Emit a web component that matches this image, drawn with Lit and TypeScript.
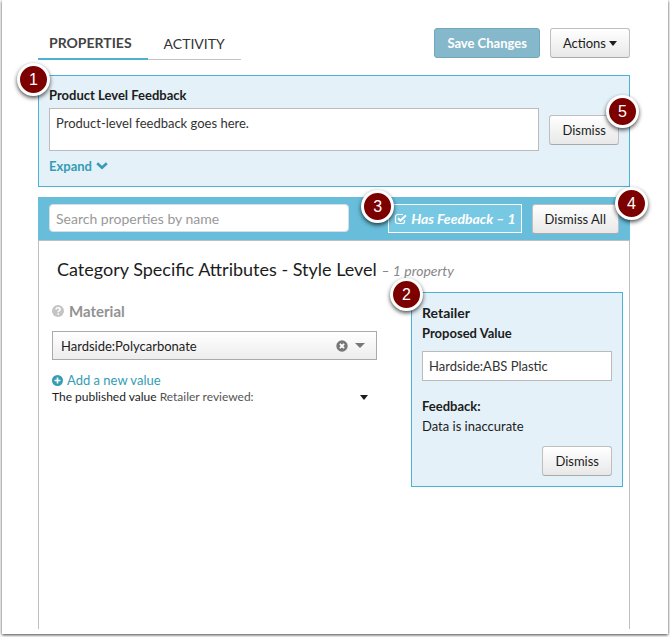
import { LitElement, html, css } from "lit";
import { customElement, property } from "lit/decorators.js";

const caret = html`<svg class="caret" viewBox="0 0 8 5" width="8" height="5" aria-hidden="true"><path d="M0 0h8L4 5z" fill="currentColor"/></svg>`;

@customElement("step-badge")
class StepBadge extends LitElement {
  @property() step = "";

  static styles = css`
    :host {
      position: absolute;
      box-sizing: border-box;
      width: 33px;
      height: 33px;
      border: 3px solid #fff;
      border-radius: 50%;
      background: #7d0000;
      box-shadow: 0 2px 4px rgba(0, 0, 0, 0.7);
      color: #fff;
      font: 16px/27px "Liberation Sans", sans-serif;
      text-align: center;
    }
  `;

  render() {
    return html`${this.step}`;
  }
}

@customElement("app-root")
class AppRoot extends LitElement {
  static styles = css`
    :host {
      display: flex;
      box-sizing: border-box;
      min-height: 100vh;
      padding: 0 2px 3px;
      background: #fff;
      color: #1c1c1c;
      font: 13px/20px Lato, sans-serif;
    }
    * {
      box-sizing: border-box;
    }
    .sheet {
      flex: 1;
      min-width: 0;
      display: flex;
      flex-direction: column;
      padding: 28px 38px 5px 36px;
      background: #fff;
      box-shadow: 0 1px 3px rgba(0, 0, 0, 0.75);
    }
    button,
    input,
    textarea,
    select {
      margin: 0;
      font: inherit;
      color: inherit;
    }
    a {
      color: #349cb5;
      text-decoration: none;
    }
    h2,
    h3,
    p {
      margin: 0;
    }
    .top {
      display: flex;
      align-items: flex-start;
      gap: 10px;
      margin-bottom: 15px;
    }
    .tabs {
      display: flex;
      margin-right: auto;
    }
    .tab {
      height: 32px;
      padding: 0 16px;
      border: 0;
      border-bottom: 1px solid #c3c3c3;
      background: none;
      font-size: 14px;
      color: #333;
    }
    .tab.on {
      padding: 0 16px 0 11px;
      border-bottom: 2px solid #4bb2d3;
      font-weight: bold;
      color: #444;
    }
    .btn {
      flex: none;
      height: 30px;
      padding: 0 12px;
      border: 1px solid #bfbfbf;
      border-bottom-color: #aaa;
      border-radius: 3px;
      background: linear-gradient(#fff, #e8e8e8);
      white-space: nowrap;
    }
    .btn.save {
      border-color: #72a8bc;
      background: #86b8cb;
      color: #fff;
      font-weight: bold;
    }
    .btn .caret {
      margin-left: 3px;
      vertical-align: 2px;
    }
    .panel {
      position: relative;
      border: 1px solid #4bb2d3;
      background: #e4f1f9;
    }
    .product {
      display: grid;
      grid-template-columns: 1fr auto;
      column-gap: 10px;
      align-items: center;
      padding: 9px 10px 10px;
    }
    .product label,
    .product a {
      grid-column: 1 / -1;
      font-weight: bold;
      justify-self: start;
    }
    .product label {
      margin-bottom: 3px;
    }
    .product a {
      display: flex;
      align-items: center;
      gap: 4px;
      margin: 5px 0 0;
    }
    .field {
      display: block;
      width: 100%;
      border: 1px solid #bbb;
      border-radius: 0;
      background: #fff;
      color: #333;
      outline: 0;
    }
    textarea.field {
      height: 43px;
      padding: 4px 6px;
      resize: none;
      overflow: hidden;
    }
    .filter {
      position: relative;
      display: flex;
      align-items: flex-start;
      gap: 10px;
      height: 44px;
      margin-top: 10px;
      padding: 7px 11px 0;
      border-bottom: 1px solid #bfbfbf;
      background: #68bddb;
    }
    .search {
      flex: 0 1 300px;
      min-width: 0;
      height: 28px;
      margin-right: auto;
      padding: 0 6px;
      border: 1px solid #d5dfe3;
      border-radius: 4px;
      background: #fff;
      font-size: 14px;
      outline: 0;
    }
    .search::placeholder {
      color: #999;
    }
    .has {
      position: relative;
      flex: none;
      display: flex;
      align-items: center;
      gap: 3px;
      height: 29px;
      padding: 0 5px;
      border: 1px solid #fff;
      background: #77c8e3;
      color: #fff;
      font-size: 14px;
      font-style: italic;
      font-weight: bold;
    }
    .tick {
      display: grid;
      width: 14px;
      height: 14px;
    }
    .tick > * {
      grid-area: 1 / 1;
      width: 14px;
      height: 14px;
    }
    .tick input {
      appearance: none;
    }
    .content {
      flex: 1;
      padding: 16px 6px 20px 13px;
      border: solid #bfbfbf;
      border-width: 0 1px;
    }
    .title {
      margin-left: 5px;
      font-size: 18px;
      font-weight: normal;
      line-height: 24px;
    }
    .title em {
      font-size: 14px;
      color: #888;
    }
    .cols {
      display: grid;
      grid-template-columns: minmax(0, 325fr) minmax(0, 212fr);
      gap: 34px;
      align-items: start;
      margin-top: 9px;
    }
    .name {
      display: flex;
      align-items: center;
      gap: 5px;
      margin: 9px 0 10px;
      font-size: 15px;
      font-weight: bold;
      color: #929292;
    }
    .picker {
      position: relative;
    }
    .picker select {
      display: block;
      appearance: none;
      width: 100%;
      height: 29px;
      padding: 0 44px 0 8px;
      border: 1px solid #aaa;
      border-radius: 0;
      background: linear-gradient(#fff, #ededed);
      outline: 0;
    }
    .tools {
      position: absolute;
      inset: 0 12px 0 auto;
      display: flex;
      align-items: center;
      gap: 7px;
      color: #777;
      pointer-events: none;
    }
    .clear {
      display: flex;
      padding: 0;
      border: 0;
      background: none;
      pointer-events: auto;
    }
    .add {
      display: flex;
      align-items: center;
      gap: 4px;
      width: max-content;
      margin-top: 10px;
    }
    .published {
      display: flex;
      align-items: center;
      justify-content: space-between;
      width: 100%;
      padding: 0 9px 0 0;
      border: 0;
      background: none;
      font-size: 12px;
      line-height: 14px;
      text-align: left;
    }
    .published span span {
      color: #555;
    }
    .retailer {
      padding: 10px;
    }
    .retailer h3 {
      font-size: 14px;
      line-height: 20px;
    }
    .retailer .field {
      height: 30px;
      margin: 8px 0 15px;
      padding: 0 6px;
    }
    .strong {
      display: block;
      font-weight: bold;
    }
    .retailer .btn {
      display: block;
      margin: 10px 0 0 auto;
    }
    .b1 {
      left: -22px;
      top: -13px;
    }
    .b5 {
      right: -10px;
      top: 19px;
    }
    .b4 {
      right: -18px;
      top: -10px;
    }
    .b3 {
      left: -28px;
      top: -15px;
    }
    .b2 {
      left: -22px;
      top: -15px;
    }
  `;

  render() {
    return html`
      <main class="sheet">
        <div class="top">
          <div class="tabs" role="tablist">
            <button class="tab on" role="tab" aria-selected="true">PROPERTIES</button>
            <button class="tab" role="tab" aria-selected="false">ACTIVITY</button>
          </div>
          <button class="btn save">Save Changes</button>
          <button class="btn">Actions${caret}</button>
        </div>

        <section class="panel product">
          <label for="feedback">Product Level Feedback</label>
          <textarea id="feedback" class="field" .value=${"Product-level feedback goes here."}></textarea>
          <button class="btn">Dismiss</button>
          <a href="#expand">Expand
            <svg width="12" height="8" viewBox="0 0 12 8" aria-hidden="true"><path d="M1.2 1.2 6 5.8l4.8-4.6" fill="none" stroke="currentColor" stroke-width="2.6"/></svg>
          </a>
          <step-badge class="b1" step="1"></step-badge>
          <step-badge class="b5" step="5"></step-badge>
        </section>

        <div class="filter">
          <input class="search" type="search" placeholder="Search properties by name" aria-label="Search properties by name">
          <label class="has">
            <span class="tick">
              <input type="checkbox" checked>
              <svg viewBox="0 0 14 14" fill="none" stroke="#fff" aria-hidden="true">
                <path d="M10.5 8v1.500a2 2 0 0 1-2 2h-5a2 2 0 0 1-2-2v-5a2 2 0 0 1 2-2H9" stroke-width="1.2"/>
                <path d="M4 6.200 6.500 8.700 12 3.200" stroke-width="2"/>
              </svg>
            </span>
            Has Feedback – 1
            <step-badge class="b3" step="3"></step-badge>
          </label>
          <button class="btn">Dismiss All</button>
          <step-badge class="b4" step="4"></step-badge>
        </div>

        <section class="content">
          <h2 class="title">Category Specific Attributes - Style Level <em>– 1 property</em></h2>
          <div class="cols">
            <div>
              <label class="name" for="material">
                <svg width="12" height="12" viewBox="0 0 12 12" aria-hidden="true">
                  <circle cx="6" cy="6" r="6" fill="#c4c4c4"/>
                  <path d="M4 4.600C4 3.200 5 2.700 6 2.700s2.100.6 2.100 1.700C8.100 5.700 6.200 5.600 6.200 7.200" fill="none" stroke="#fff" stroke-width="1.5"/>
                  <path d="M5.400 8.200h1.600v1.500H5.400z" fill="#fff"/>
                </svg>
                Material
              </label>
              <div class="picker">
                <select id="material"><option>Hardside:Polycarbonate</option></select>
                <span class="tools">
                  <button class="clear" aria-label="Clear value">
                    <svg width="12" height="12" viewBox="0 0 12 12" aria-hidden="true"><circle cx="6" cy="6" r="5.7" fill="#777"/><path d="m3.900 3.900 4.200 4.200m0-4.200L3.900 8.100" stroke="#fff" stroke-width="1.8"/></svg>
                  </button>
                  <svg width="10" height="5" viewBox="0 0 10 5" aria-hidden="true"><path d="M0 0h10L5 5z" fill="currentColor"/></svg>
                </span>
              </div>
              <a class="add" href="#add">
                <svg width="11" height="11" viewBox="0 0 12 12" aria-hidden="true"><circle cx="6" cy="6" r="6" fill="currentColor"/><path d="M6 2.800v6.400M2.800 6h6.400" stroke="#fff" stroke-width="1.8"/></svg>
                Add a new value
              </a>
              <button class="published"><span>The published value <span>Retailer reviewed:</span></span>${caret}</button>
            </div>

            <aside class="panel retailer">
              <h3>Retailer</h3>
              <label class="strong" for="proposed">Proposed Value</label>
              <input id="proposed" class="field" .value=${"Hardside:ABS Plastic"}>
              <span class="strong">Feedback:</span>
              <p>Data is inaccurate</p>
              <button class="btn">Dismiss</button>
              <step-badge class="b2" step="2"></step-badge>
            </aside>
          </div>
        </section>
      </main>
    `;
  }
}
